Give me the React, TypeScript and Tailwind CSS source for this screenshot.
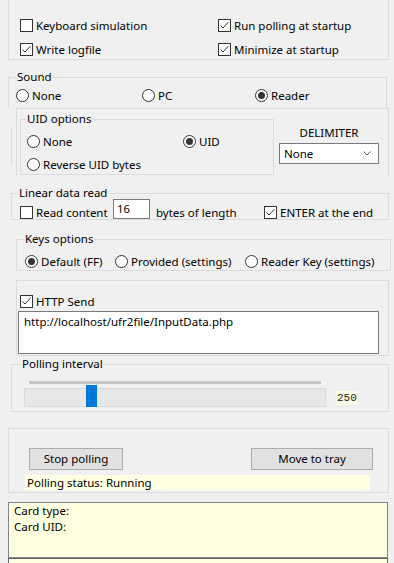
import type { ReactNode } from "react";

function Check({ checked, label }: { checked?: boolean; label: string }) {
  return (
    <div className="flex h-[13px] items-center gap-[3px] whitespace-nowrap">
      <span className="grid size-[13px] shrink-0 place-items-center border border-[#333333] bg-white">
        {checked && (
          <svg width="11" height="11" viewBox="0 0 11 11">
            <path d="M1.5 5.5 L4 8 L9.5 2" fill="none" stroke="#333333" strokeWidth="1" />
          </svg>
        )}
      </span>
      <span className="leading-[16px]">{label}</span>
    </div>
  );
}

function Radio({ on, label }: { on?: boolean; label: string }) {
  return (
    <div className="flex h-[13px] items-center gap-[3px] whitespace-nowrap">
      <span className="grid size-[13px] shrink-0 place-items-center rounded-full border border-[#333333] bg-white">
        {on && <span className="size-[7px] rounded-full bg-[#333333]" />}
      </span>
      <span className="leading-[16px]">{label}</span>
    </div>
  );
}

function Group({ label, labelClass = "left-[7px]", className, children }: { label?: string; labelClass?: string; className: string; children: ReactNode }) {
  return (
    <div className={`relative border-[#dcdcdc] ${className}`}>
      {label && <span className={`absolute -top-[9px] bg-[#f0f0f0] px-[1px] leading-[16px] ${labelClass}`}>{label}</span>}
      {children}
    </div>
  );
}

export default function App() {
  return (
    <div className="h-[563px] w-[394px] overflow-hidden bg-[#f0f0f0] font-['Noto_Sans',sans-serif] text-[11.5px] text-black">
      {/* general options */}
      <div className="ml-[8px] h-[60px] w-[381px] border-x border-b border-[#dcdcdc] pl-[11px] pt-[19px]">
        <div className="grid grid-cols-[198px_1fr] gap-y-[11px]">
          <Check label="Keyboard simulation" />
          <Check checked label="Run polling at startup" />
          <Check checked label="Write logfile" />
          <Check checked label="Minimize at startup" />
        </div>
      </div>

      <Group label="Sound" className="ml-[8px] mt-[17px] h-[31px] w-[379px] border-x border-t pl-[7px] pt-[11px]">
        <div className="grid grid-cols-[126px_113px_1fr]">
          <Radio label="None" />
          <Radio label="PC" />
          <Radio on label="Reader" />
        </div>
      </Group>

      <div className="flex">
        <div className="ml-[11px] mt-[19px] h-[39px] w-px border-t border-[#dcdcdc] bg-[#dcdcdc]" />
        <div className="ml-[4px] flex h-[68px] w-[373px] border border-b-0 border-[#dcdcdc] pl-[3px] pt-[10px]">
          <Group label="UID options" labelClass="left-[5px]" className="h-[56px] w-[254px] border pl-[6px] pt-[15px]">
            <div className="grid grid-cols-[156px_1fr] gap-y-[10px]">
              <Radio label="None" />
              <Radio on label="UID" />
              <Radio label="Reverse UID bytes" />
            </div>
          </Group>
          <div className="ml-[5px] flex w-[100px] flex-col">
            <span className="mt-[6px] text-center leading-[16px]">DELIMITER</span>
            <div className="mt-[2px] flex h-[21px] w-[100px] items-center justify-between border border-[#7a7a7a] bg-white pl-[4px] pr-[7px]">
              <span className="leading-[16px]">None</span>
              <svg width="8" height="5" viewBox="0 0 8 5">
                <path d="M0.5 0.5 L4 4 L7.5 0.5" fill="none" stroke="#606060" strokeWidth="1" />
              </svg>
            </div>
          </div>
        </div>
      </div>

      <Group label="Linear data read" labelClass="left-[6px]" className="ml-[11px] mt-[17px] h-[27px] w-[378px] border pl-[8px] pt-[12px]">
        <div className="flex h-[13px] items-center">
          <div className="w-[93px]">
            <Check label="Read content" />
          </div>
          <div className="mb-[7px] flex h-[20px] w-[37px] items-center border border-[#7a7a7a] bg-white pl-[3px] leading-[16px]">16</div>
          <span className="ml-[6px] w-[108px] leading-[16px]">bytes of length</span>
          <Check checked label="ENTER at the end" />
        </div>
      </Group>

      <Group label="Keys options" className="ml-[16px] mt-[19px] h-[32px] w-[375px] border pl-[8px] pt-[15px]">
        <div className="grid grid-cols-[90px_130px_1fr]">
          <Radio on label="Default (FF)" />
          <Radio label="Provided (settings)" />
          <Radio label="Reader Key (settings)" />
        </div>
      </Group>

      <Group className="ml-[16px] mt-[9px] h-[76px] w-[373px] border pl-[1px] pt-[14px]">
        <div className="ml-[2px]">
          <Check checked label="HTTP Send" />
        </div>
        <div className="mt-[3px] h-[43px] w-[361px] border border-[#7a7a7a] bg-white px-[5px] pt-[2px] leading-[16px]">http://localhost/ufr2file/InputData.php</div>
      </Group>

      <Group label="Polling interval" labelClass="left-[9px]" className="ml-[11px] mt-[8px] h-[48px] w-[378px] border pt-[16px]">
        <div className="ml-[17px] h-[3px] w-[292px] bg-[#c6c6c6]" />
        <div className="mt-[4px] flex items-center">
          <div className="relative ml-[12px] h-[19px] w-[302px] border border-[#d9d9d9] bg-[#e7e7e7]">
            <span className="absolute -top-[4px] left-[61px] h-[22px] w-[11px] bg-[#0078d7]" />
          </div>
          <span className="ml-[10px] bg-[#fcfce6] px-[1px] font-['Liberation_Mono',monospace] text-[11px] leading-[14px] text-[#222]">250</span>
        </div>
      </Group>

      <Group className="ml-[8px] mt-[16px] h-[65px] w-[381px] border pl-[20px] pt-[19px]">
        <div className="flex">
          <button className="h-[22px] w-[94px] border border-[#adadad] bg-[#e1e1e1] leading-[16px]">Stop polling</button>
          <button className="ml-[128px] h-[22px] w-[122px] border border-[#adadad] bg-[#e1e1e1] leading-[16px]">Move to tray</button>
        </div>
        <div className="-ml-[4px] mt-[5px] h-[15px] w-[345px] bg-[#ffffe1] pl-[2px] leading-[15px]">Polling status: Running</div>
      </Group>

      <div className="ml-[8px] mt-[9px] h-[56px] w-[380px] border border-[#828282] bg-[#ffffe1] px-[5px] leading-[16px]">
        <div>Card type:</div>
        <div>Card UID:</div>
      </div>
      <div className="ml-[8px] h-[20px] w-[380px] border-x border-t border-[#646464] bg-[#ffffe1]" />
    </div>
  );
}
